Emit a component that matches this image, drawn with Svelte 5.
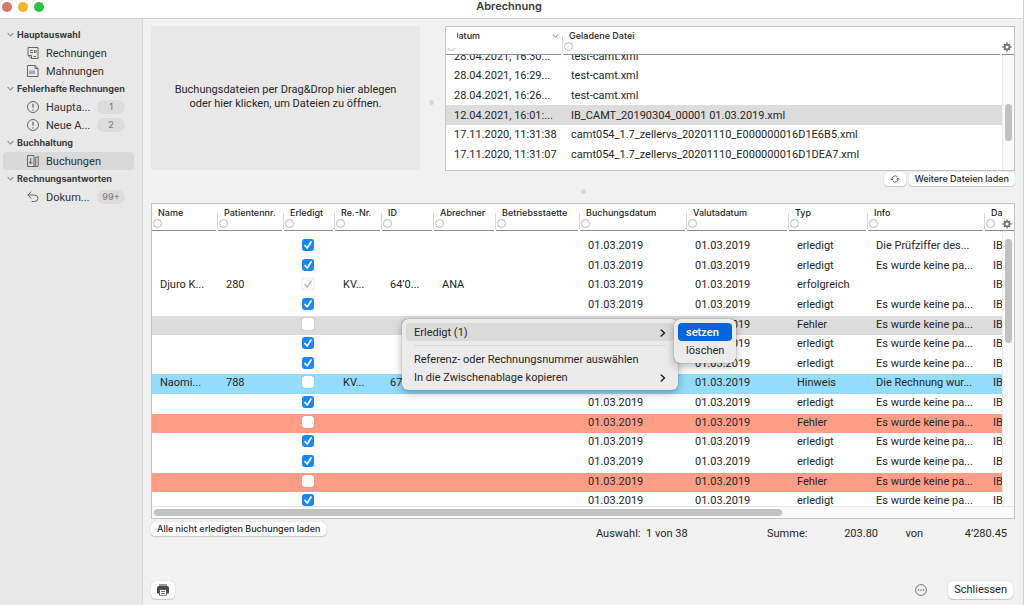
<script>
  import { onMount } from 'svelte';

  const groups = [
    { title: 'Hauptauswahl', items: [
      { label: 'Rechnungen', icon: 'invoice' },
      { label: 'Mahnungen', icon: 'reminder' }
    ] },
    { title: 'Fehlerhafte Rechnungen', items: [
      { label: 'Haupta...', icon: 'alert', count: '1' },
      { label: 'Neue A...', icon: 'alert', count: '2' }
    ] },
    { title: 'Buchhaltung', items: [
      { label: 'Buchungen', icon: 'booking', active: true }
    ] },
    { title: 'Rechnungsantworten', items: [
      { label: 'Dokum...', icon: 'reply', count: '99+' }
    ] }
  ];

  const files = [
    { date: '28.04.2021, 16:30...', name: 'test-camt.xml' },
    { date: '28.04.2021, 16:29...', name: 'test-camt.xml' },
    { date: '28.04.2021, 16:26...', name: 'test-camt.xml' },
    { date: '12.04.2021, 16:01:...', name: 'IB_CAMT_20190304_00001 01.03.2019.xml', selected: true },
    { date: '17.11.2020, 11:31:38', name: 'camt054_1.7_zellervs_20201110_E000000016D1E6B5.xml' },
    { date: '17.11.2020, 11:31:07', name: 'camt054_1.7_zellervs_20201110_E000000016D1DEA7.xml' }
  ];

  const columns = [
    { label: 'Name', cls: 'w-name' },
    { label: 'Patientennr.', cls: 'w-patient' },
    { label: 'Erledigt', cls: 'w-done' },
    { label: 'Re.-Nr.', cls: 'w-nr' },
    { label: 'ID', cls: 'w-id' },
    { label: 'Abrechner', cls: 'w-biller' },
    { label: 'Betriebsstaette', cls: 'w-site' },
    { label: 'Buchungsdatum', cls: 'w-booked' },
    { label: 'Valutadatum', cls: 'w-valuta' },
    { label: 'Typ', cls: 'w-type' },
    { label: 'Info', cls: 'w-info' },
    { label: 'Da', cls: 'w-da' }
  ];

  const missing = 'Es wurde keine pa...';
  const day = '01.03.2019';

  let bookings = $state([
    { done: true, type: 'erledigt', info: 'Die Prüfziffer des...' },
    { done: true, type: 'erledigt', info: missing },
    { done: true, locked: true, type: 'erfolgreich', info: '', name: 'Djuro K...', patient: '280', nr: 'KV...', id: '64’0...', biller: 'ANA' },
    { done: true, type: 'erledigt', info: missing },
    { done: false, type: 'Fehler', info: missing, tone: 'selected' },
    { done: true, type: 'erledigt', info: missing },
    { done: true, type: 'erledigt', info: missing },
    { done: false, type: 'Hinweis', info: 'Die Rechnung wur...', name: 'Naomi...', patient: '788', nr: 'KV...', id: '67', tone: 'hint' },
    { done: true, type: 'erledigt', info: missing },
    { done: false, type: 'Fehler', info: missing, tone: 'error' },
    { done: true, type: 'erledigt', info: missing },
    { done: true, type: 'erledigt', info: missing },
    { done: false, type: 'Fehler', info: missing, tone: 'error' },
    { done: true, type: 'erledigt', info: missing }
  ]);

  let fileList;

  onMount(() => {
    fileList.scrollTop = 9;
  });
</script>

{#snippet gear()}
  <button class="gear" aria-label="Spalten">
    <svg viewBox="0 0 20 20" width="10" height="10">
      <g stroke="#737373" stroke-width="3">
        <path d="M10 1v18M1 10h18M4 4l12 12M16 4L4 16" />
      </g>
      <circle cx="10" cy="10" r="6.5" fill="#737373" />
      <circle cx="10" cy="10" r="3" fill="#fff" />
    </svg>
  </button>
{/snippet}

{#snippet chevron()}
  <svg class="chevron" viewBox="0 0 6 8" width="6" height="8" fill="none" stroke="#222" stroke-width="1.5" stroke-linecap="round" stroke-linejoin="round">
    <path d="M1.2 1l3.3 3-3.3 3" />
  </svg>
{/snippet}

<div class="window">
  <header>
    <div class="lights"><i class="red"></i><i class="yellow"></i><i class="green"></i></div>
    <h1>Abrechnung</h1>
  </header>

  <div class="body">
    <nav>
      {#each groups as group}
        <h2>
          <svg viewBox="0 0 8 6" width="7" height="6" fill="none" stroke="#666" stroke-width="1.1" stroke-linecap="round"><path d="M1 1l3 3.4L7 1" /></svg>
          {group.title}
        </h2>
        {#each group.items as item}
          <a href="#{item.label}" class:active={item.active}>
            <svg viewBox="0 0 14 14" width="14" height="14" fill="none" stroke="#666" stroke-width="1">
              {#if item.icon === 'invoice'}
                <path d="M2 1.5h10v11H5.5L2 9.5zM2 9.5h3.5v3" />
                <path d="M4 4.5h3M4 6.5h3M8.5 4v3M10 4v3M7.5 10.5H10" />
              {:else if item.icon === 'reminder'}
                <path d="M1.5 1.5H9l3 3v8H1.5zM9 1.5v3h3" />
                <path d="M4 6.5V10M6 6.5V10M8 6.5V10" />
              {:else if item.icon === 'alert'}
                <circle cx="7" cy="7" r="5.5" />
                <path d="M7 3.8v4M7 9.3v1.2" stroke-width="1.2" />
              {:else if item.icon === 'booking'}
                <path d="M1.5 1.5H8v11H1.5zM9.7 3v9.5M9.7 3.5l2.5-1v10H8" />
                <path d="M4.7 4v5.5M3 8l1.7 1.9L6.4 8" />
              {:else}
                <path d="M5 2L2 5l3 3.2M2 5h6.5q3.5 0 3.5 3.3Q12 11.5 8.5 11.5H6" stroke-linecap="round" stroke-linejoin="round" />
              {/if}
            </svg>
            <span class="label">{item.label}</span>
            {#if item.count}<span class="count">{item.count}</span>{/if}
          </a>
        {/each}
      {/each}
    </nav>

    <main>
      <section class="top">
        <button class="drop">Buchungsdateien per Drag&amp;Drop hier ablegen<br />oder hier klicken, um Dateien zu öffnen.</button>
        <div class="splitter"><i></i></div>
        <div class="grid files">
          <div class="scroll" bind:this={fileList}>
            <table>
              <thead>
                <tr>
                  <th class="w-date">
                    <div class="head">
                      <span>Datum</span>
                      <button class="filter" aria-label="Filter Datum"></button>
                      <svg class="sort" viewBox="0 0 8 6" width="7" height="6" fill="none" stroke="#777" stroke-width="1.1"><path d="M1 1l3 3.4L7 1" /></svg>
                    </div>
                  </th>
                  <th>
                    <div class="head">
                      <span>Geladene Datei</span>
                      <button class="filter" aria-label="Filter Geladene Datei"></button>
                    </div>
                  </th>
                </tr>
              </thead>
              <tbody>
                {#each files as file}
                  <tr class:selected={file.selected}>
                    <td>{file.date}</td>
                    <td>{file.name}</td>
                  </tr>
                {/each}
              </tbody>
            </table>
          </div>
          <div class="side">
            <div class="corner">{@render gear()}</div>
            <div class="track"><i></i></div>
          </div>
        </div>
      </section>

      <div class="actions">
        <button class="push refresh" aria-label="Aktualisieren">
          <svg viewBox="0 0 12 12" width="10" height="10" fill="none" stroke="#555" stroke-width="1.1">
            <path d="M2.3 7A4 4 0 0 1 9 3.4M9.7 5A4 4 0 0 1 3 8.6" />
            <path d="M.7 5.6L2.3 7.3 3.9 5.6M8.1 6.4L9.7 4.7l1.6 1.7" />
          </svg>
        </button>
        <button class="push">Weitere Dateien laden</button>
      </div>
      <div class="divider"><i></i></div>

      <section class="grid bookings">
        <div class="pane">
          <table>
            <thead>
              <tr>
                {#each columns as column}
                  <th class={column.cls}>
                    <div class="head">
                      <span>{column.label}</span>
                      <button class="filter" aria-label="Filter {column.label}"></button>
                    </div>
                  </th>
                {/each}
              </tr>
            </thead>
            <tbody>
              {#each bookings as row}
                <tr class={row.tone}>
                  <td>{row.name ?? ''}</td>
                  <td>{row.patient ?? ''}</td>
                  <td class="check"><input type="checkbox" aria-label="Erledigt" bind:checked={row.done} disabled={row.locked} /></td>
                  <td>{row.nr ?? ''}</td>
                  <td>{row.id ?? ''}</td>
                  <td>{row.biller ?? ''}</td>
                  <td></td>
                  <td>{day}</td>
                  <td>{day}</td>
                  <td>{row.type}</td>
                  <td>{row.info}</td>
                  <td>IB</td>
                </tr>
              {/each}
            </tbody>
          </table>
        </div>
        <div class="side">
          <div class="corner">{@render gear()}</div>
          <div class="track"><i></i></div>
        </div>
        <div class="hbar"><i></i></div>
      </section>

      <div class="summary">
        <button class="push">Alle nicht erledigten Buchungen laden</button>
        <div class="totals">
          <span>Auswahl:</span>
          <span>1 von 38</span>
          <span>Summe:</span>
          <span class="num">203.80</span>
          <span class="num">von</span>
          <span class="num">4’280.45</span>
        </div>
      </div>

      <footer>
        <button class="push print" aria-label="Drucken">
          <svg viewBox="0 0 14 12" width="14" height="12">
            <path d="M3 0h8v2H3z" fill="#999" />
            <path d="M2.5 2h9Q13 2.5 13 4v4.5q0 1-1 1H2q-1 0-1-1V4q0-1.5 1.5-2z" fill="#4a4a4a" />
            <path d="M3.5 5.5h7V11q0 .7-.7.7H4.200q-.7 0-.7-.7z" fill="#f2f2f2" stroke="#4a4a4a" stroke-width=".8" />
            <path d="M5 7.5h4M5 9.5h4" stroke="#777" stroke-width="1" />
          </svg>
        </button>
        <button class="more" aria-label="Mehr">
          <svg viewBox="0 0 12 12" width="12" height="12">
            <circle cx="6" cy="6" r="5.4" fill="none" stroke="#777" stroke-width="1" />
            <g fill="#666"><circle cx="3.5" cy="6" r=".8" /><circle cx="6" cy="6" r=".8" /><circle cx="8.5" cy="6" r=".8" /></g>
          </svg>
        </button>
        <button class="push close">Schliessen</button>
      </footer>
    </main>
  </div>

  <div class="menu" role="menu">
    <button role="menuitem" class="open">Erledigt (1){@render chevron()}</button>
    <hr />
    <button role="menuitem">Referenz- oder Rechnungsnummer auswählen</button>
    <button role="menuitem">In die Zwischenablage kopieren{@render chevron()}</button>
  </div>
  <div class="menu submenu" role="menu">
    <button role="menuitem" class="picked">setzen</button>
    <button role="menuitem">löschen</button>
  </div>
</div>

<style>
:global(body) {
  background: #f1f1f1;
}
.window {
  position: relative;
  display: flex;
  flex-direction: column;
  height: 100vh;
  box-sizing: border-box;
  border-right: 1px solid #cfcfcf;
  font-family: Roboto, "Liberation Sans", sans-serif;
  font-size: 11px;
  line-height: 16px;
  color: #262626;
  overflow: hidden;
}
button {
  font: inherit;
  color: inherit;
  border: none;
  padding: 0;
  background: none;
}
svg {
  display: block;
  flex: none;
}
h1,
h2,
th,
.push,
.count {
  font-family: Inter, "Liberation Sans", sans-serif;
}

/* title bar */
header {
  position: relative;
  height: 18px;
  background: #fff;
  border-bottom: 1px solid #cdcdcd;
}
.lights {
  position: absolute;
  display: flex;
  gap: 6px;
  left: 2px;
  top: 2px;
}
.lights i {
  width: 10px;
  height: 10px;
  border-radius: 50%;
}
.red { background: #d9776a; }
.yellow { background: #f8b42b; }
.green { background: #27c440; }
h1 {
  margin: 0;
  padding-right: 5px;
  text-align: center;
  font-size: 11px;
  line-height: 13px;
  font-weight: 600;
  color: #3c3c3c;
}
.body {
  display: flex;
  flex: 1;
  min-height: 0;
}

/* sidebar */
nav {
  width: 134px;
  flex: none;
  padding: 7px 5px 0 3px;
  border-right: 1px solid #d6d6d6;
  background: #e8e8e8;
}
nav h2 {
  display: flex;
  align-items: center;
  gap: 3px;
  height: 18px;
  margin: 0;
  padding-left: 4px;
  font-size: 9px;
  font-weight: 700;
  color: #3a3a3a;
  white-space: nowrap;
}
nav a {
  display: flex;
  align-items: center;
  height: 18px;
  margin-right: 3px;
  padding: 0 9px 0 23px;
  border-radius: 4px;
  color: #303030;
  text-decoration: none;
}
nav a.active {
  background: #d9d9d9;
}
nav .label {
  flex: 1;
  padding: 2px 0 0 6px;
  white-space: nowrap;
}
.count {
  width: 28px;
  height: 14px;
  border-radius: 7px;
  background: #dcdcdc;
  color: #808080;
  font-size: 9px;
  font-weight: 500;
  line-height: 14px;
  text-align: center;
}

/* main area */
main {
  display: flex;
  flex-direction: column;
  flex: 1;
  min-width: 0;
  padding: 7px 8px 6px 8px;
  background: #f1f1f1;
}
.top {
  display: grid;
  grid-template-columns: 269px 25px 1fr;
  height: 145px;
}
.drop {
  height: 144px;
  padding-bottom: 3px;
  background: #e8e8e8;
  line-height: 14px;
}
.splitter,
.divider {
  display: flex;
  align-items: center;
  justify-content: center;
}
.splitter i,
.divider i {
  width: 5px;
  height: 5px;
  border-radius: 50%;
  background: #d8d8d8;
}
.splitter {
  padding: 8px 2px 0 0;
}
.divider {
  height: 11px;
  padding-bottom: 6px;
}

/* tables */
.grid {
  display: grid;
  grid-template-columns: 1fr 12px;
  min-height: 0;
  min-width: 0;
  border: 1px solid #c3c3c3;
  background: #fff;
}
table {
  width: 100%;
  table-layout: fixed;
  border-collapse: collapse;
}
th {
  position: relative;
  padding: 0;
  font-size: 9px;
  font-weight: 500;
  line-height: 12px;
  text-align: left;
  vertical-align: top;
  background: #fff;
}
th + th::before {
  content: "";
  position: absolute;
  left: -1px;
  top: 9px;
  height: 16px;
  border-left: 1px solid #d8d8d8;
}
.head {
  position: relative;
  box-sizing: border-box;
  height: 27px;
  margin-right: 2px;
  padding: 3px 0 0 1px;
  border-bottom: 1px solid #8c8c8c;
  white-space: nowrap;
  overflow: hidden;
}
.head span {
  display: block;
  padding-left: 5px;
}
.filter {
  display: block;
  box-sizing: border-box;
  width: 9px;
  height: 9px;
  border: 1px solid #b9b9b9;
  border-radius: 50%;
  background: #fff;
}
td {
  padding: 2px 0 0 8px;
  white-space: nowrap;
  overflow: hidden;
}
.selected {
  background: #dcdcdc;
}
.hint {
  background: #93dcfd;
}
.error {
  background: #ff9d87;
}
.side {
  display: flex;
  flex-direction: column;
}
.corner {
  box-sizing: border-box;
  height: 27px;
  padding: 15px 0 0 0;
  border-bottom: 1px solid #8c8c8c;
}
.gear {
  display: block;
}
.track {
  flex: 1;
  background: #fafafa;
  border-left: 1px solid #ececec;
}
.track i {
  display: block;
  width: 7px;
  margin-left: 2px;
  border-radius: 4px;
  background: #c1c1c1;
}

.files {
  height: 143px;
}
.scroll {
  overflow-y: auto;
  scrollbar-width: none;
}
.files table {
  height: 146px;
  margin-bottom: 32px;
}
.files th {
  position: sticky;
  top: 0;
  height: 28px;
  z-index: 1;
}
.files .head,
.files .corner {
  height: 28px;
}
.w-date {
  width: 117px;
}
/* white patch over the start of the sorted column's label */
.w-date .head::after {
  content: "";
  position: absolute;
  left: 0;
  top: 0;
  width: 11px;
  height: 21px;
  background: #fff;
}
.sort {
  position: absolute;
  right: 2px;
  top: 6px;
}
.files .track i {
  height: 37px;
  margin-top: 49px;
}

.actions {
  display: flex;
  justify-content: flex-end;
  gap: 3px;
  margin-top: 1px;
}
.push {
  height: 14px;
  padding: 0 6px;
  border-radius: 4px;
  background: #fff;
  box-shadow: 0 0 1px rgba(0, 0, 0, 0.25), 0 1px 1px rgba(0, 0, 0, 0.15);
  font-size: 9px;
  font-weight: 500;
  line-height: 14px;
  white-space: nowrap;
}

.bookings {
  flex: 1;
  grid-template-rows: 1fr 12px;
}
.pane {
  overflow: hidden;
  min-height: 0;
}
.bookings table {
  height: 308px;
}
.bookings th {
  height: 33px;
}
.bookings td {
  padding: 1px 0 2px 8px;
  vertical-align: top;
}
.w-name, .w-patient { width: 66px; }
.w-done { width: 51px; }
.w-nr { width: 47px; }
.w-id { width: 52px; }
.w-biller { width: 62px; }
.w-site { width: 84px; }
.w-booked { width: 107px; }
.w-valuta { width: 102px; }
.w-type { width: 79px; }
.w-da { width: 17px; }
.w-da .head {
  margin-right: 0;
}
.bookings td.check {
  padding: 2px 0 0 18px;
}
input[type="checkbox"] {
  appearance: none;
  display: block;
  width: 12px;
  height: 12px;
  margin: 0;
  border-radius: 3px;
  background: #fff;
  box-shadow: 0 0 1px rgba(0, 0, 0, 0.45);
}
input[type="checkbox"]:checked {
  background: #1a85ff url("data:image/svg+xml,%3Csvg xmlns='http://www.w3.org/2000/svg' viewBox='0 0 12 12'%3E%3Cpath d='M3 6.5l2.2 2.5L9 3' fill='none' stroke='white' stroke-width='1.7' stroke-linecap='round' stroke-linejoin='round'/%3E%3C/svg%3E");
  box-shadow: none;
}
input[type="checkbox"]:checked:disabled {
  background: #f9f9f9 url("data:image/svg+xml,%3Csvg xmlns='http://www.w3.org/2000/svg' viewBox='0 0 12 12'%3E%3Cpath d='M3 6.5l2.2 2.5L9 3' fill='none' stroke='%23b0b0b0' stroke-width='1.3' stroke-linecap='round' stroke-linejoin='round'/%3E%3C/svg%3E");
  box-shadow: 0 0 1px rgba(0, 0, 0, 0.35);
}
.bookings .track i {
  height: 104px;
  margin-top: 8px;
}
.hbar {
  grid-column: 1 / 3;
  padding: 2px 0 0 2px;
  border-top: 1px solid #e6e6e6;
  background: #fafafa;
}
.hbar i {
  display: block;
  width: 73%;
  height: 7px;
  border-radius: 4px;
  background: #c1c1c1;
}

.summary {
  display: flex;
  align-items: flex-start;
  justify-content: space-between;
  height: 22px;
  margin-top: 3px;
}
.totals {
  display: grid;
  grid-template-columns: 50px 121px 40px 71px 45px 84px;
  padding: 4px 8px 0 0;
}
.num {
  text-align: right;
}
footer {
  display: flex;
  align-items: center;
  margin-top: 37px;
}
footer .push {
  height: 18px;
  border-radius: 5px;
}
.print {
  padding: 0 5px;
}
.more {
  margin-left: auto;
}
footer .close {
  margin: 0 2px 0 21px;
  font-family: inherit;
  font-size: 11px;
  font-weight: 400;
}

/* context menu */
.menu {
  position: absolute;
  left: 402px;
  top: 319px;
  box-sizing: border-box;
  width: 276px;
  padding: 4px;
  border-radius: 6px;
  background: #ebebeb;
  box-shadow: 0 0 1px rgba(0, 0, 0, 0.6), 0 3px 10px rgba(0, 0, 0, 0.3);
}
.menu button {
  display: flex;
  align-items: center;
  justify-content: space-between;
  width: 100%;
  height: 18px;
  padding: 2px 8px 0;
  border-radius: 4px;
  white-space: nowrap;
}
.menu button.open {
  background: #dadada;
}
.menu hr {
  margin: 4px 8px;
  border: none;
  border-top: 1px solid #d8d8d8;
}
.submenu {
  left: 674px;
  width: 62px;
}
.menu button.picked {
  background: #0064e1;
  color: #fff;
  font-weight: 600;
}
</style>
